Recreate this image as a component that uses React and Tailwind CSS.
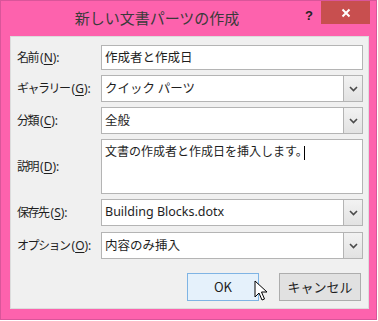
import React from "react";

const jp = { fontFamily: '"Meiryo UI", "Noto Sans CJK JP", "Noto Sans", sans-serif' };
const latinFont = { fontFamily: '"Noto Sans", "Open Sans", sans-serif' };

function Label({ text, keyChar }) {
  return (
    <div className="w-[90px] flex-none pl-[6px] whitespace-nowrap text-[12px] text-[#1e1e1e]" style={jp}>
      <span className="tracking-[-1.5px]">{text}</span>
      <span style={latinFont} className="ml-[2px]">
        (<span className="underline underline-offset-2">{keyChar}</span>):
      </span>
    </div>
  );
}

function Chevron() {
  return (
    <svg width="9" height="6" viewBox="0 0 9 6">
      <path d="M1 1 L4.5 4.5 L8 1" fill="none" stroke="#4a4a4a" strokeWidth="1.6" />
    </svg>
  );
}

function TextBox({ value }) {
  return (
    <div className="w-[262px] h-[25px] bg-white border border-[#b4b4b4] flex items-center pl-[3px] text-[12.5px] text-[#1e1e1e]" style={jp}>
      {value}
    </div>
  );
}

function Combo({ value, latin }) {
  return (
    <div className="w-[262px] h-[27px] bg-white border border-[#b4b4b4] flex items-stretch">
      <div className="flex-1 flex items-center pl-[3px] text-[12.5px] text-[#1e1e1e]" style={latin ? latinFont : jp}>
        {value}
      </div>
      <div className="w-[19px] border-l border-[#b4b4b4] bg-gradient-to-b from-[#f2f2f2] to-[#e2e2e2] flex items-center justify-center">
        <Chevron />
      </div>
    </div>
  );
}

function Pointer() {
  return (
    <svg className="absolute left-[66px] top-[6px]" width="14" height="22" viewBox="0 0 14 22">
      <path d="M1 1 L1 17 L5 13 L8 20 L10.5 19 L7.5 12 L13 12 Z" fill="#fff" stroke="#000" strokeWidth="1" strokeLinejoin="round" />
    </svg>
  );
}

export default function App() {
  return (
    <div className="w-[378px] h-[321px] bg-white">
      <div className="w-[377px] h-[320px] bg-[#fd62ad] border border-[#d9559a] flex flex-col">
        <div className="h-[35px] flex items-start relative">
          <div className="flex-1 pt-[6px] text-center text-[15px] text-[#3a3a3a] pl-[8px]" style={jp}>
            新しい文書パーツの作成
          </div>
          <div className="w-[14px] pt-[5px] text-[13px] font-bold text-[#222]" style={{ fontFamily: '"Liberation Sans", sans-serif' }}>?</div>
          <div className="ml-[2px] mr-[6px] w-[49px] h-[23px] bg-[#c84f4f] flex items-center justify-center">
            <svg width="10" height="10" viewBox="0 0 10 10">
              <path d="M1.5 1.5 L8.5 8.5 M8.5 1.5 L1.5 8.5" stroke="#fff" strokeWidth="2" />
            </svg>
          </div>
        </div>
        <div className="ml-[9px] mr-[7px] h-[273px] bg-[#f0f0f0] border border-[#dcdcdc] pt-[8px] flex flex-col">
          <div className="flex items-center h-[25px]">
            <Label text="名前" keyChar="N" />
            <TextBox value="作成者と作成日" />
          </div>
          <div className="flex items-center h-[27px] mt-[5px]">
            <Label text="ギャラリー" keyChar="G" />
            <Combo value="クイック パーツ" />
          </div>
          <div className="flex items-center h-[27px] mt-[5px]">
            <Label text="分類" keyChar="C" />
            <Combo value="全般" />
          </div>
          <div className="flex items-center h-[55px] mt-[5px]">
            <Label text="説明" keyChar="D" />
            <div className="w-[262px] h-[55px] bg-white border border-[#b4b4b4] pl-[3px] pt-[1px] text-[12px] text-[#1e1e1e] leading-[20px]" style={jp}>
              文書の作成者と作成日を挿入します。<span className="inline-block w-px h-[14px] bg-black align-middle -ml-[4px]" />
            </div>
          </div>
          <div className="flex items-center h-[27px] mt-[5px]">
            <Label text="保存先" keyChar="S" />
            <Combo value="Building Blocks.dotx" latin />
          </div>
          <div className="flex items-center h-[27px] mt-[6px]">
            <Label text="オプション" keyChar="O" />
            <Combo value="内容のみ挿入" />
          </div>
          <div className="flex justify-end gap-[20px] mt-[14px] pr-[7px]">
            <div className="relative w-[72px] h-[28px] bg-[#e5f1fb] border border-[#7fb4e4] flex items-center justify-center text-[13px] text-[#1e1e1e]" style={jp}>
              OK
              <Pointer />
            </div>
            <div className="w-[82px] h-[28px] bg-[#e1e1e1] border border-[#adadad] flex items-center justify-center text-[13px] text-[#1e1e1e]" style={jp}>
              キャンセル
            </div>
          </div>
        </div>
      </div>
    </div>
  );
}
